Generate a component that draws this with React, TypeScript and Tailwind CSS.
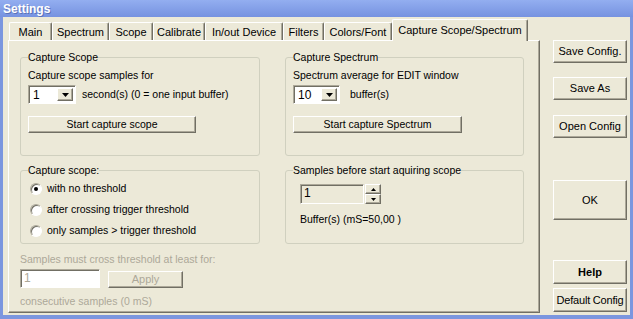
import React from 'react';

const tabs = [
  { label: 'Main', w: 'w-[43px]' },
  { label: 'Spectrum', w: 'w-[57px]' },
  { label: 'Scope', w: 'w-[44px]' },
  { label: 'Calibrate', w: 'w-[52px]' },
  { label: 'In/out Device', w: 'w-[78px]' },
  { label: 'Filters', w: 'w-[41px]' },
  { label: 'Colors/Font', w: 'w-[68px]' },
];

const raised =
  'bg-[#ece9d8] border border-t-white border-l-white border-r-[#716f64] border-b-[#716f64] shadow-[inset_-1px_-1px_#aca899]';
const sunken =
  'border border-t-[#aca899] border-l-[#aca899] border-r-white border-b-white shadow-[inset_1px_1px_#716f64]';

const Arrow = ({ up = false, small = false }: { up?: boolean; small?: boolean }) => (
  <svg
    width={small ? 5 : 7}
    height={small ? 3 : 4}
    viewBox="0 0 7 4"
    className={up ? 'rotate-180' : ''}
  >
    <path d="M0 0h7L3.5 4z" fill="#000" />
  </svg>
);

const Combo = ({ value, w }: { value: string; w: string }) => (
  <div className={`${w} h-[19px] bg-white flex items-stretch p-[2px] ${sunken}`}>
    <span className="flex-1 pl-[2px] text-[12px] leading-[15px]">{value}</span>
    <div className={`w-[16px] flex items-center justify-center ${raised}`}>
      <Arrow />
    </div>
  </div>
);

const Radio = ({ label, checked = false }: { label: string; checked?: boolean }) => (
  <div className="h-[21px] flex items-center ml-[2px]">
    <div className={`w-[12px] h-[12px] rounded-full bg-white flex items-center justify-center ${sunken}`}>
      {checked && <div className="w-[4px] h-[4px] rounded-full bg-black" />}
    </div>
    <span className="ml-[5px]">{label}</span>
  </div>
);

const Button = ({ children, className = '' }: { children: React.ReactNode; className?: string }) => (
  <div className={`flex items-center justify-center whitespace-nowrap ${raised} ${className}`}>{children}</div>
);

export default function App() {
  return (
    <div className="w-[633px] h-[319px] bg-[#7b96df] flex flex-col font-['Liberation_Sans',Arial,sans-serif] text-[11px] leading-[13px] text-black overflow-hidden">
      {/* title bar */}
      <div className="h-[17px] pl-[3px] pt-[2px] bg-gradient-to-b from-[#93aef0] to-[#7692e0] text-white font-bold text-[12px] leading-[14px] [text-shadow:1px_1px_#5b72b8]">
        Settings
      </div>

      <div className="flex-1 mx-[3px] mb-[4px] bg-[#ece9d8] flex pl-[5px] pt-[2px]">
        {/* tab control */}
        <div className="w-[532px] flex flex-col">
          <div className="h-[21px] flex items-end pl-[1px]">
            {tabs.map((t) => (
              <div
                key={t.label}
                className={`${t.w} h-[18px] pt-[3px] text-center whitespace-nowrap rounded-t-[2px] border-t border-l border-t-white border-l-white border-r border-r-[#716f64] shadow-[inset_-1px_0_#aca899]`}
              >
                {t.label}
              </div>
            ))}
            <div className="w-[136px] h-[22px] -mb-[1px] relative pt-[4px] text-center whitespace-nowrap bg-[#ece9d8] rounded-t-[2px] border-t border-l border-t-white border-l-white border-r border-r-[#716f64] shadow-[inset_-1px_0_#aca899]">
              Capture Scope/Spectrum
            </div>
          </div>

          <div className="h-[273px] pl-[11px] pt-[10px] text-[10.5px] border border-t-white border-l-white border-r-[#716f64] border-b-[#716f64] shadow-[inset_-1px_-1px_#aca899]">
            {/* row 1 */}
            <div className="flex gap-[25px]">
              <fieldset className="w-[240px] h-[105px] px-[7px] pt-[5px] border border-[#d0d0bf] rounded-[3px]">
                <legend>Capture Scope</legend>
                <div>Capture scope samples for</div>
                <div className="flex items-center mt-[3px]">
                  <Combo value="1" w="w-[48px]" />
                  <span className="ml-[6px]">second(s) (0 = one input buffer)</span>
                </div>
                <Button className="w-[168px] h-[17px] mt-[12px]">Start capture scope</Button>
              </fieldset>
              <fieldset className="w-[239px] h-[105px] px-[7px] pt-[5px] border border-[#d0d0bf] rounded-[3px]">
                <legend>Capture Spectrum</legend>
                <div>Spectrum average for EDIT window</div>
                <div className="flex items-center mt-[3px]">
                  <Combo value="10" w="w-[47px]" />
                  <span className="ml-[10px]">buffer(s)</span>
                </div>
                <Button className="w-[169px] h-[17px] mt-[12px]">Start capture Spectrum</Button>
              </fieldset>
            </div>

            {/* row 2 */}
            <div className="flex gap-[25px] mt-[8px]">
              <fieldset className="w-[240px] h-[80px] px-[7px] pt-[1px] border border-[#d0d0bf] rounded-[3px]">
                <legend>Capture scope:</legend>
                <Radio label="with no threshold" checked />
                <Radio label="after crossing trigger threshold" />
                <Radio label="only samples > trigger threshold" />
              </fieldset>
              <fieldset className="w-[239px] h-[80px] px-[7px] pt-[7px] border border-[#d0d0bf] rounded-[3px]">
                <legend>Samples before start aquiring scope</legend>
                <div className="flex ml-[7px] h-[20px]">
                  <div className={`w-[64px] h-[20px] pl-[3px] text-[12px] leading-[17px] ${sunken}`}>1</div>
                  <div className="ml-[1px] flex flex-col">
                    <div className={`w-[16px] h-[10px] flex items-center justify-center ${raised}`}>
                      <Arrow up small />
                    </div>
                    <div className={`w-[16px] h-[10px] flex items-center justify-center ${raised}`}>
                      <Arrow small />
                    </div>
                  </div>
                </div>
                <div className="ml-[7px] mt-[9px]">Buffer(s) (mS=50,00 )</div>
              </fieldset>
            </div>

            {/* disabled threshold */}
            <div className="text-[#aca899]">
              <div className="mt-[9px]">Samples must cross threshold at least for:</div>
              <div className="flex items-start mt-[3px]">
                <div className={`w-[80px] h-[19px] pl-[3px] bg-white text-[12px] leading-[16px] ${sunken}`}>1</div>
                <Button className="w-[75px] h-[17px] ml-[8px] mt-[2px] text-[11px]">Apply</Button>
              </div>
              <div className="mt-[7px]">consecutive samples (0 mS)</div>
            </div>
          </div>
        </div>

        {/* right buttons */}
        <div className="ml-[13px] pt-[21px] flex flex-col w-[74px]">
          <Button className="h-[23px]">Save Config.</Button>
          <Button className="h-[23px] mt-[14px]">Save As</Button>
          <Button className="h-[23px] mt-[15px]">Open Config</Button>
          <Button className="h-[40px] mt-[42px]">OK</Button>
          <Button className="h-[24px] mt-[40px] font-bold">Help</Button>
          <Button className="h-[24px] mt-[4px] tracking-[-0.2px]">Default Config</Button>
        </div>
      </div>
    </div>
  );
}
